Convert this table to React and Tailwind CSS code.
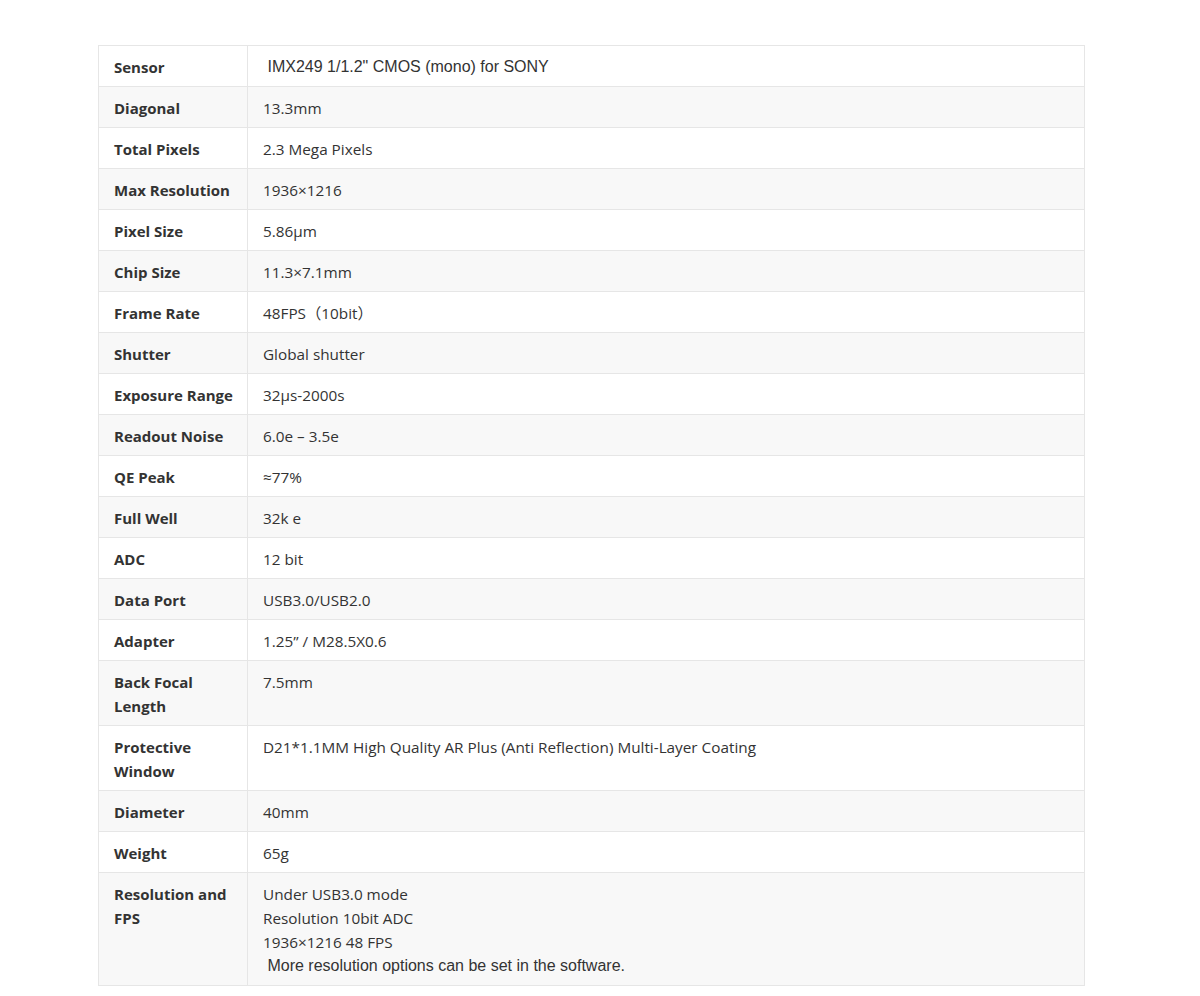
import React from 'react';

const rows = [
  ['Sensor', [' IMX249 1/1.2" CMOS (mono) for SONY'], 'arial'],
  ['Diagonal', ['13.3mm']],
  ['Total Pixels', ['2.3 Mega Pixels']],
  ['Max Resolution', ['1936×1216']],
  ['Pixel Size', ['5.86μm']],
  ['Chip Size', ['11.3×7.1mm']],
  ['Frame Rate', ['48FPS（10bit）']],
  ['Shutter', ['Global shutter']],
  ['Exposure Range', ['32μs-2000s']],
  ['Readout Noise', ['6.0e – 3.5e']],
  ['QE Peak', ['≈77%']],
  ['Full Well', ['32k e']],
  ['ADC', ['12 bit']],
  ['Data Port', ['USB3.0/USB2.0']],
  ['Adapter', ['1.25” / M28.5X0.6']],
  ['Back Focal Length', ['7.5mm']],
  ['Protective Window', ['D21*1.1MM High Quality AR Plus (Anti Reflection) Multi-Layer Coating']],
  ['Diameter', ['40mm']],
  ['Weight', ['65g']],
  ['Resolution and FPS', ['Under USB3.0 mode', 'Resolution 10bit ADC', '1936×1216 48 FPS']],
];

export default function App() {
  return (
    <div className="min-h-screen bg-white pt-[45px] pl-[98px] font-['Open_Sans','Noto_Sans_CJK_SC',sans-serif] text-[15px] leading-[24px] text-[#333]">
      <table className="w-[987px] table-fixed border-collapse border border-[#e6e6e6]">
        <colgroup>
          <col className="w-[149px]" />
          <col />
        </colgroup>
        <tbody>
          {rows.map(([label, lines, kind], i) => (
            <tr key={label} className={i % 2 === 1 ? 'bg-[#f8f8f8]' : 'bg-white'}>
              <td className="border border-[#e6e6e6] pl-[15px] pr-[8px] pt-[9px] pb-[7px] align-top font-bold">
                {label === 'Back Focal Length' ? (
                  <>Back Focal<br />Length</>
                ) : label === 'Protective Window' ? (
                  <>Protective<br />Window</>
                ) : label === 'Resolution and FPS' ? (
                  <>Resolution and<br />FPS</>
                ) : (
                  <span className="whitespace-nowrap">{label}</span>
                )}
              </td>
              <td className="border border-[#e6e6e6] pl-[15px] pr-4 pt-[9px] pb-[7px] align-top text-[15.3px]">
                {kind === 'arial' ? (
                  <div className="whitespace-pre font-['Liberation_Sans',Arial,sans-serif] text-[16px]">{lines[0]}</div>
                ) : (
                  lines.map((l) => <div key={l}>{l}</div>)
                )}
                {label === 'Resolution and FPS' && (
                  <div className="whitespace-pre font-['Liberation_Sans',Arial,sans-serif] text-[16px]">{' More resolution options can be set in the software.'}</div>
                )}
              </td>
            </tr>
          ))}
        </tbody>
      </table>
    </div>
  );
}
